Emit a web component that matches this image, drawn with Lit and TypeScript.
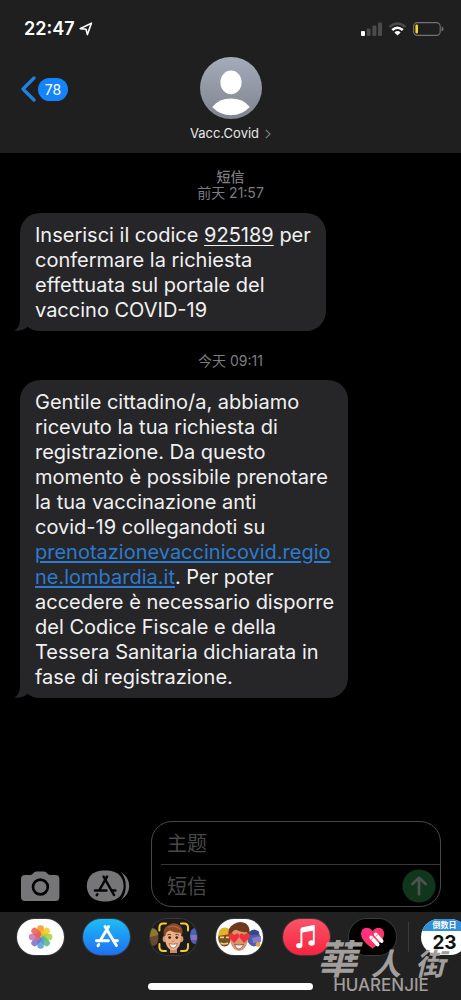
import { LitElement, html, css, svg } from "lit";
import { customElement, property } from "lit/decorators.js";

const PETALS = ["#f7941d", "#f4c81e", "#a9cf3a", "#4fb98a", "#4d9fd6", "#7f6cc0", "#c173b4", "#ee5b4f"];

const photosArt = svg`
  <rect width="47" height="36" fill="#fff" />
  ${PETALS.map(
    (color, i) => svg`<rect x="20.3" y="6.2" width="6.6" height="11.4" rx="3.3" fill=${color}
      fill-opacity="0.85" transform="rotate(${i * 45} 23.6 18)" />`
  )}`;

const storeArt = svg`
  <defs>
    <linearGradient id="store" x1="0" y1="0" x2="0" y2="1">
      <stop offset="0" stop-color="#1cbdf8" />
      <stop offset="1" stop-color="#1f6ff0" />
    </linearGradient>
  </defs>
  <rect width="47" height="36" fill="url(#store)" />
  <g stroke="#fff" stroke-width="2.9" stroke-linecap="round" fill="none">
    <path d="M22 7.6 L33.4 26.6" />
    <path d="M25.6 7.6 L17.4 21.2" />
    <path d="M13.4 21.8 H25.4" />
    <path d="M31 21.8 H34.4" />
    <path d="M15.8 25.4 L15 26.8" />
  </g>`;

const memojiArt = svg`
  <rect width="47" height="36" fill="#1c1c1d" />
  <ellipse cx="2.5" cy="19" rx="6" ry="8" fill="#6b4a32" />
  <path d="M0 9 Q7 8 8.5 16 L0 18 Z" fill="#8f7a2a" />
  <ellipse cx="45" cy="17" rx="5" ry="8" fill="#4a63b8" />
  <path d="M40.5 16 H47 V21 H41 Z" fill="#8d6fc0" />
  <rect x="20" y="26" width="7" height="8" fill="#c98a68" />
  <ellipse cx="14.6" cy="20" rx="2" ry="3" fill="#d99770" />
  <ellipse cx="31.4" cy="20" rx="2" ry="3" fill="#d99770" />
  <path d="M15 16 Q15 8 23 8 Q31 8 31 16 L30.6 23 Q28.5 31 23 31.4 Q17.5 31 15.4 23 Z" fill="#eab08a" />
  <path d="M13.8 17 Q12.4 8 19 6 Q24 2.6 29 6 Q34 8.6 32 17 Q31 17 30.4 13.6 Q26 14.6 20 11.6 Q16 12.4 15.4 17 Z" fill="#8a4a26" />
  <path d="M18 8.6 Q24 5 30 10" stroke="#b06a3a" stroke-width="1.2" fill="none" />
  <path d="M17.4 16 Q19 14.8 21 15.8 M25.4 15.8 Q27.4 14.8 29 16" stroke="#6d3a1e" stroke-width="1" fill="none" />
  <circle cx="19.6" cy="18.6" r="1.4" fill="#3b2318" />
  <circle cx="26.8" cy="18.6" r="1.4" fill="#3b2318" />
  <path d="M22.2 22 Q23.2 22.8 24.3 22" stroke="#b9714f" stroke-width="0.9" fill="none" />
  <path d="M19 24.6 Q23.2 26 27.4 24.6 Q26 29 23.2 29 Q20.4 29 19 24.6 Z" fill="#fff" stroke="#94463a" stroke-width="0.7" />
  <g stroke="#f3cc2d" stroke-width="2" fill="none" stroke-linecap="round">
    <path d="M9.4 11.4 V8.4 Q9.4 4.4 13.4 4.4 H16" />
    <path d="M31 4.4 H34 Q38 4.4 38 8.4 V11.4" />
    <path d="M9.4 25 V28 Q9.4 32 13.4 32 H16" />
    <path d="M31 32 H34 Q38 32 38 28 V25" />
  </g>`;

const stickersArt = svg`
  <rect width="47" height="36" fill="#fff" />
  <ellipse cx="8.6" cy="19" rx="6.4" ry="8.6" fill="#7a4d22" />
  <path d="M2.4 17 Q2 8.4 9 8.4 Q14 8.6 14.6 15 Z" fill="#e0b424" />
  <path d="M4 18.4 H8 M10 18.4 H13" stroke="#f2d27a" stroke-width="1.6" />
  <path d="M4.6 24 Q8 26 12 24" stroke="#f2d27a" stroke-width="1.6" fill="none" />
  <ellipse cx="38" cy="19.4" rx="6.6" ry="8" fill="#4b5fae" />
  <path d="M33 13 Q38 8 43.4 13 L42 16 H34 Z" fill="#36478c" />
  <path d="M36 19 L45 17 V23 L37 24 Z" fill="#8a79c9" />
  <circle cx="42" cy="25.4" r="2.4" fill="#d8a23e" />
  <path d="M14 16 Q14 7 23 7 Q32 7 32 16 L31.6 23 Q29 31.6 23 32 Q17 31.6 14.4 23 Z" fill="#d9966c" />
  <path d="M12.6 17 Q11.4 8 18 5 Q24 1.4 30 4.6 Q35 8.6 33 17 Q31.6 16 31 13 Q26 14 20 10.8 Q15.4 12 14.6 17 Z" fill="#6e3a1e" />
  <path d="M18.4 24 L13 19 Q11.6 15.4 14.6 14.2 Q17 13.8 18.4 16 Q19.8 13.8 22 14.6 Q24 16 22.8 18.8 Z" fill="#f0303c" />
  <path d="M28 24 L23.6 18.8 Q22.6 15.6 25 14.6 Q27 13.8 28 16 Q29.4 13.8 31.8 14.2 Q34.6 15.4 33.4 19 Z" fill="#f0303c" />
  <path d="M18.6 25.4 Q23 26.8 27.6 25.4 Q26 30 23 30 Q20 30 18.6 25.4 Z" fill="#fff" stroke="#8d3b32" stroke-width="0.7" />`;

const musicArt = svg`
  <defs>
    <linearGradient id="music" x1="0" y1="0" x2="0" y2="1">
      <stop offset="0" stop-color="#fa5468" />
      <stop offset="1" stop-color="#f8233f" />
    </linearGradient>
  </defs>
  <rect width="47" height="36" fill="url(#music)" />
  <path d="M18.4 9.4 L30.8 7 V23.6" fill="none" stroke="#fff" stroke-width="1.9" stroke-linejoin="round" />
  <path d="M18.4 9.4 V26.2" stroke="#fff" stroke-width="1.9" />
  <path d="M18.2 9.6 L31 7.2 V11.4 L18.2 13.8 Z" fill="#fff" />
  <ellipse cx="16.2" cy="26.6" rx="3.2" ry="2.7" fill="#fff" />
  <ellipse cx="28.6" cy="24" rx="3.2" ry="2.7" fill="#fff" />`;

const touchArt = svg`
  <defs>
    <linearGradient id="touch" x1="0" y1="0" x2="1" y2="1">
      <stop offset="0" stop-color="#ff2f8b" />
      <stop offset="1" stop-color="#ff3a4e" />
    </linearGradient>
  </defs>
  <rect width="47" height="36" fill="#000" />
  <path d="M23.6 29.6 Q12 21.6 12 15 Q12.2 9.2 17.6 8.8 Q21.6 8.8 23.6 12.4 Q25.8 8.8 29.6 8.8 Q35 9.2 35.2 15 Q35.2 21.6 23.6 29.6 Z" fill="url(#touch)" />
  <g stroke="#fff" stroke-width="3.8" stroke-linecap="round">
    <path d="M22.2 18.4 L28.6 25.6" />
    <path d="M26.8 15.4 L32.6 22" />
  </g>
  <g stroke="#f54a78" stroke-width="0.8" fill="none">
    <path d="M22 20.6 L24.8 18 M26.4 17.8 L29.2 15.2" />
  </g>`;

const APPS = [
  { name: "Photos", art: photosArt },
  { name: "App Store", art: storeArt },
  { name: "Memoji", art: memojiArt },
  { name: "Stickers", art: stickersArt },
  { name: "Music", art: musicArt },
  { name: "Digital Touch", art: touchArt },
];

const base = css`
  * {
    box-sizing: border-box;
  }
  button {
    display: block;
    border: 0;
    padding: 0;
    margin: 0;
    background: none;
    color: inherit;
    font: inherit;
    cursor: pointer;
  }
  svg {
    display: block;
  }
`;

@customElement("status-bar")
class StatusBar extends LitElement {
  static styles = [
    base,
    css`
      :host {
        display: flex;
        align-items: center;
        height: 57px;
        padding: 0 17px 0 24px;
        color: #fff;
      }
      .time {
        font-size: 18px;
        line-height: 22px;
        font-weight: 600;
      }
      .arrow {
        margin-left: 4px;
      }
      .signals {
        display: flex;
        align-items: center;
        gap: 6px;
        margin-left: auto;
      }
    `,
  ];

  render() {
    return html`
      <span class="time">22:47</span>
      <svg class="arrow" width="14" height="14" viewBox="0 0 14 14">
        <path d="M1.2 6.6 L12.4 1.2 L8.4 12.6 L7 7.2 Z" fill="none" stroke="#fff" stroke-width="1.6" stroke-linejoin="round" />
      </svg>
      <div class="signals">
        <svg width="21" height="14" viewBox="0 0 21 14">
          <rect x="0" y="9" width="4" height="5" rx="1" fill="#fff" />
          <rect x="5.7" y="6.6" width="4" height="7.4" rx="1" fill="#4b4b4b" />
          <rect x="11.4" y="3.6" width="4" height="10.4" rx="1" fill="#4b4b4b" />
          <rect x="17" y="0.6" width="4" height="13.4" rx="1" fill="#4b4b4b" />
        </svg>
        <svg width="19" height="14" viewBox="0 0 19 14" fill="none">
          <path d="M1.4 4.9 Q9.5 -2 17.6 4.9" stroke="#4b4b4b" stroke-width="2.5" />
          <path d="M4.2 8 Q9.5 3.4 14.8 8" stroke="#fff" stroke-width="2.5" />
          <path d="M9.5 13.6 L6.4 10.4 Q9.5 7.8 12.6 10.4 Z" fill="#fff" />
        </svg>
        <svg width="31" height="14" viewBox="0 0 31 14">
          <rect x="0.6" y="0.6" width="26.6" height="12.8" rx="3.8" fill="none" stroke="#727272" stroke-width="1.1" />
          <rect x="2.4" y="2.6" width="2.6" height="8.8" rx="1.1" fill="#f8d32c" />
          <path d="M28.6 4.6 Q30.6 5.4 30.6 7 Q30.6 8.6 28.6 9.4 Z" fill="#727272" />
        </svg>
      </div>
    `;
  }
}

@customElement("contact-header")
class ContactHeader extends LitElement {
  static styles = [
    base,
    css`
      :host {
        display: grid;
        grid-template-columns: 1fr auto 1fr;
        align-items: start;
        padding: 0 20px 11px;
      }
      .back {
        display: flex;
        align-items: center;
        gap: 2px;
        height: 64px;
        justify-self: start;
      }
      .count {
        display: block;
        min-width: 30px;
        padding: 0 6px;
        border-radius: 12px;
        background: #1584fb;
        color: #fff;
        font-size: 14px;
        line-height: 23px;
        text-align: center;
      }
      .contact {
        display: flex;
        flex-direction: column;
        align-items: center;
        gap: 6px;
        color: #e9e9ea;
      }
      .name {
        display: flex;
        align-items: center;
        gap: 6px;
        font-size: 13px;
        line-height: 17px;
      }
    `,
  ];

  render() {
    return html`
      <button class="back" aria-label="返回">
        <svg width="16" height="26" viewBox="0 0 16 26">
          <path d="M14 2 L3 13 L14 24" fill="none" stroke="#1f80e6" stroke-width="3.2" stroke-linecap="round" stroke-linejoin="round" />
        </svg>
        <span class="count">78</span>
      </button>
      <button class="contact">
        <svg width="62" height="62" viewBox="0 0 62 62">
          <defs>
            <linearGradient id="face" x1="0" y1="0" x2="0" y2="1">
              <stop offset="0" stop-color="#a5abb9" />
              <stop offset="1" stop-color="#7f848f" />
            </linearGradient>
          </defs>
          <circle cx="31" cy="31" r="31" fill="url(#face)" />
          <ellipse cx="31" cy="25.4" rx="10.6" ry="11.8" fill="#fff" />
          <path d="M12.2 50 Q19 41.6 31 41.6 Q43 41.6 49.8 50 Q42 58.2 31 58.2 Q20 58.2 12.2 50 Z" fill="#fff" />
        </svg>
        <span class="name">
          Vacc.Covid
          <svg width="6" height="10" viewBox="0 0 6 10">
            <path d="M0.8 0.8 L5 5 L0.8 9.2" fill="none" stroke="#7b7b80" stroke-width="1.2" />
          </svg>
        </span>
      </button>
    `;
  }
}

@customElement("message-bubble")
class MessageBubble extends LitElement {
  static styles = [
    base,
    css`
      :host {
        display: block;
        position: relative;
        align-self: flex-start;
        max-width: 78%;
        padding: 10px 15px 8px;
        border-radius: 20px;
        background: #262629;
        color: #f1f1f2;
        font-size: 20px;
        line-height: 25px;
        overflow-wrap: anywhere;
      }
      .tail {
        position: absolute;
        left: -6px;
        bottom: 0;
      }
    `,
  ];

  render() {
    return html`
      <svg class="tail" width="22" height="20" viewBox="0 0 22 20">
        <path d="M6 0 V8 Q6 17 0 19.6 Q8 20.6 14 15.4 L20 19 V4 Z" fill="#262629" />
      </svg>
      <slot></slot>
    `;
  }
}

@customElement("message-composer")
class MessageComposer extends LitElement {
  static styles = [
    base,
    css`
      :host {
        display: flex;
        align-items: flex-end;
        padding: 0 20px 5px;
      }
      .tools {
        display: flex;
        align-items: center;
        gap: 26px;
        margin: 0 21px 5px 0;
      }
      .fields {
        flex: 1;
        min-width: 0;
        border: 1px solid #48484a;
        border-radius: 21px;
        padding-left: 9px;
      }
      .row {
        display: flex;
        align-items: center;
        height: 42px;
        padding: 0 4px 0 6px;
      }
      .row + .row {
        border-top: 1px solid #363638;
      }
      .field {
        flex: 1;
        min-width: 0;
        height: 40px;
        padding: 2px 0 0;
        border: 0;
        outline: 0;
        background: none;
        color: #f1f1f2;
        font: inherit;
        font-size: 20px;
      }
      .field::placeholder {
        color: #48484a;
        opacity: 1;
      }
    `,
  ];

  render() {
    return html`
      <div class="tools">
        <button aria-label="相机">
          <svg width="40" height="32" viewBox="0 0 40 32">
            <path d="M5 5 H10.4 Q12 5 13 3.6 Q14.4 1.4 16.4 1.4 H24 Q26 1.4 27.4 3.6 Q28.4 5 30 5 H35.4 Q39.4 5 39.4 9 V27 Q39.4 31 35.4 31 H5 Q1 31 1 27 V9 Q1 5 5 5 Z" fill="#767678" />
            <circle cx="20.4" cy="17" r="7.4" fill="none" stroke="#000" stroke-width="2.6" />
          </svg>
        </button>
        <button aria-label="应用">
          <svg width="44" height="32" viewBox="0 0 44 32">
            <path d="M16.5 0.6 H22 Q37 2 37.6 16 Q37 30 22 31.4 H16.5 Q1.4 30 0.8 16 Q1.4 2 16.5 0.6 Z" fill="#767678" />
            <path d="M35 2 Q43.2 7.4 43.2 16 Q43.2 24.6 35 30 Q39.8 24 39.8 16 Q39.8 8 35 2 Z" fill="#767678" />
            <g stroke="#050505" stroke-width="2.5" stroke-linecap="round" fill="none">
              <path d="M17.6 6.6 L28 25" />
              <path d="M21 6.6 L13.4 20" />
              <path d="M9 20.4 H20.4" />
              <path d="M26.4 20.4 H29.4" />
              <path d="M11.4 24.2 L10.8 25.2" />
            </g>
          </svg>
        </button>
      </div>
      <div class="fields">
        <div class="row">
          <input class="field" type="text" aria-label="主题" placeholder="主题" />
        </div>
        <div class="row">
          <input class="field" type="text" aria-label="短信" placeholder="短信" />
          <button aria-label="发送">
            <svg width="34" height="34" viewBox="0 0 34 34">
              <circle cx="17" cy="17" r="16.6" fill="#10361b" />
              <path d="M17 25.4 V9.4 M10.4 15 L17 8.8 L23.6 15" fill="none" stroke="#4c524d" stroke-width="2.8" stroke-linecap="round" stroke-linejoin="round" />
            </svg>
          </button>
        </div>
      </div>
    `;
  }
}

@customElement("app-pill")
class AppPill extends LitElement {
  @property() name = "";
  @property({ attribute: false }) art: unknown = null;

  static styles = [
    base,
    css`
      :host {
        display: block;
      }
      .pill {
        width: 47px;
        height: 36px;
        border-radius: 18px;
        overflow: hidden;
        box-shadow: 0 0 0 1px #39393b;
      }
    `,
  ];

  render() {
    return html`
      <button class="pill" aria-label=${this.name}>
        <svg width="47" height="36" viewBox="0 0 47 36">${this.art}</svg>
      </button>
    `;
  }
}

@customElement("app-tray")
class AppTray extends LitElement {
  static styles = [
    base,
    css`
      :host {
        display: flex;
        flex-direction: column;
        align-items: stretch;
        gap: 28px;
        padding: 7px 0 10px 17px;
        background: #212122;
        position: relative;
        overflow: hidden;
      }
      .strip {
        display: flex;
        align-items: center;
      }
      .apps {
        flex: 1;
        display: flex;
        justify-content: space-between;
      }
      .rule {
        width: 1px;
        height: 30px;
        margin: 0 12px;
        background: #3a3a3c;
      }
      .countdown {
        width: 47px;
        height: 36px;
        margin-right: -7px;
        border-radius: 18px;
        overflow: hidden;
        background: #fff;
        color: #111;
        text-align: center;
      }
      .caption {
        display: block;
        background: #2f8fd8;
        color: #fff;
        font-size: 8px;
        line-height: 12px;
        font-weight: 700;
      }
      .days {
        display: block;
        font-size: 19px;
        line-height: 24px;
        font-weight: 700;
      }
      .home {
        width: 165px;
        height: 7px;
        margin: 0 17px 0 0;
        align-self: center;
        border-radius: 4px;
        background: #fff;
      }
    `,
  ];

  render() {
    return html`
      <div class="strip">
        <div class="apps">
          ${APPS.map((app) => html`<app-pill .name=${app.name} .art=${app.art}></app-pill>`)}
        </div>
        <div class="rule"></div>
        <button class="countdown">
          <span class="caption">倒数日</span>
          <span class="days">23</span>
        </button>
      </div>
      <div class="home"></div>
    `;
  }
}

@customElement("site-mark")
class SiteMark extends LitElement {
  static styles = [
    base,
    css`
      :host {
        display: flex;
        flex-direction: column;
        align-items: center;
        color: #a19e9b;
        pointer-events: none;
      }
      .han {
        display: flex;
        align-items: flex-end;
        gap: 14px;
        font-family: "Noto Sans CJK TC", sans-serif;
        font-size: 30px;
        line-height: 30px;
        font-style: italic;
        font-weight: 700;
      }
      .lead {
        font-size: 40px;
        line-height: 40px;
      }
      .latin {
        font-size: 17px;
        line-height: 16px;
        font-weight: 500;
      }
    `,
  ];

  render() {
    return html`
      <div class="han"><span class="lead">華</span><span>人</span><span>街</span></div>
      <div class="latin">HUARENJIE</div>
    `;
  }
}

@customElement("app-root")
class AppRoot extends LitElement {
  static styles = [
    base,
    css`
      :host {
        display: flex;
        flex-direction: column;
        position: relative;
        min-height: 100vh;
        background: #000;
        color: #fff;
        font-family: Inter, "Noto Sans CJK SC", sans-serif;
        overflow: hidden;
      }
      .top {
        background: #1f1f1f;
      }
      .thread {
        flex: 1;
        display: flex;
        flex-direction: column;
        padding: 16px 20px;
      }
      .stamp {
        color: #7d7d81;
        font-size: 14px;
        line-height: 16px;
        text-align: center;
      }
      .kind {
        font-weight: 500;
      }
      .first {
        margin: 12px 0 22px;
      }
      .second {
        margin-top: 11px;
        padding-right: 12px;
      }
      .code {
        color: inherit;
        text-decoration-thickness: 1px;
        text-underline-offset: 3px;
      }
      .term {
        white-space: nowrap;
      }
      .link {
        color: #2b7bd0;
        text-decoration-thickness: 2px;
        text-underline-offset: 2px;
      }
      .mark {
        position: absolute;
        right: 16px;
        bottom: 7px;
      }
    `,
  ];

  render() {
    return html`
      <header class="top">
        <status-bar></status-bar>
        <contact-header></contact-header>
      </header>
      <main class="thread">
        <div class="stamp"><span class="kind">短信</span><br />前天 21:57</div>
        <message-bubble class="first"
          >Inserisci il codice <a class="code" href="#925189">925189</a> per<br />confermare la richiesta<br />effettuata sul
          portale del<br />vaccino COVID-19</message-bubble
        >
        <div class="stamp">今天 09:11</div>
        <message-bubble class="second"
          >Gentile cittadino/a, abbiamo ricevuto la tua richiesta di registrazione. Da questo momento è possibile prenotare
          la tua vaccinazione anti <span class="term">covid-19</span> collegandoti su
          <a class="link" href="#prenotazione">prenotazionevaccinicovid.regione.lombardia.it</a>. Per poter accedere è
          necessario disporre del Codice Fiscale e della Tessera Sanitaria dichiarata in fase di
          registrazione.</message-bubble
        >
      </main>
      <message-composer></message-composer>
      <app-tray></app-tray>
      <site-mark class="mark"></site-mark>
    `;
  }
}
